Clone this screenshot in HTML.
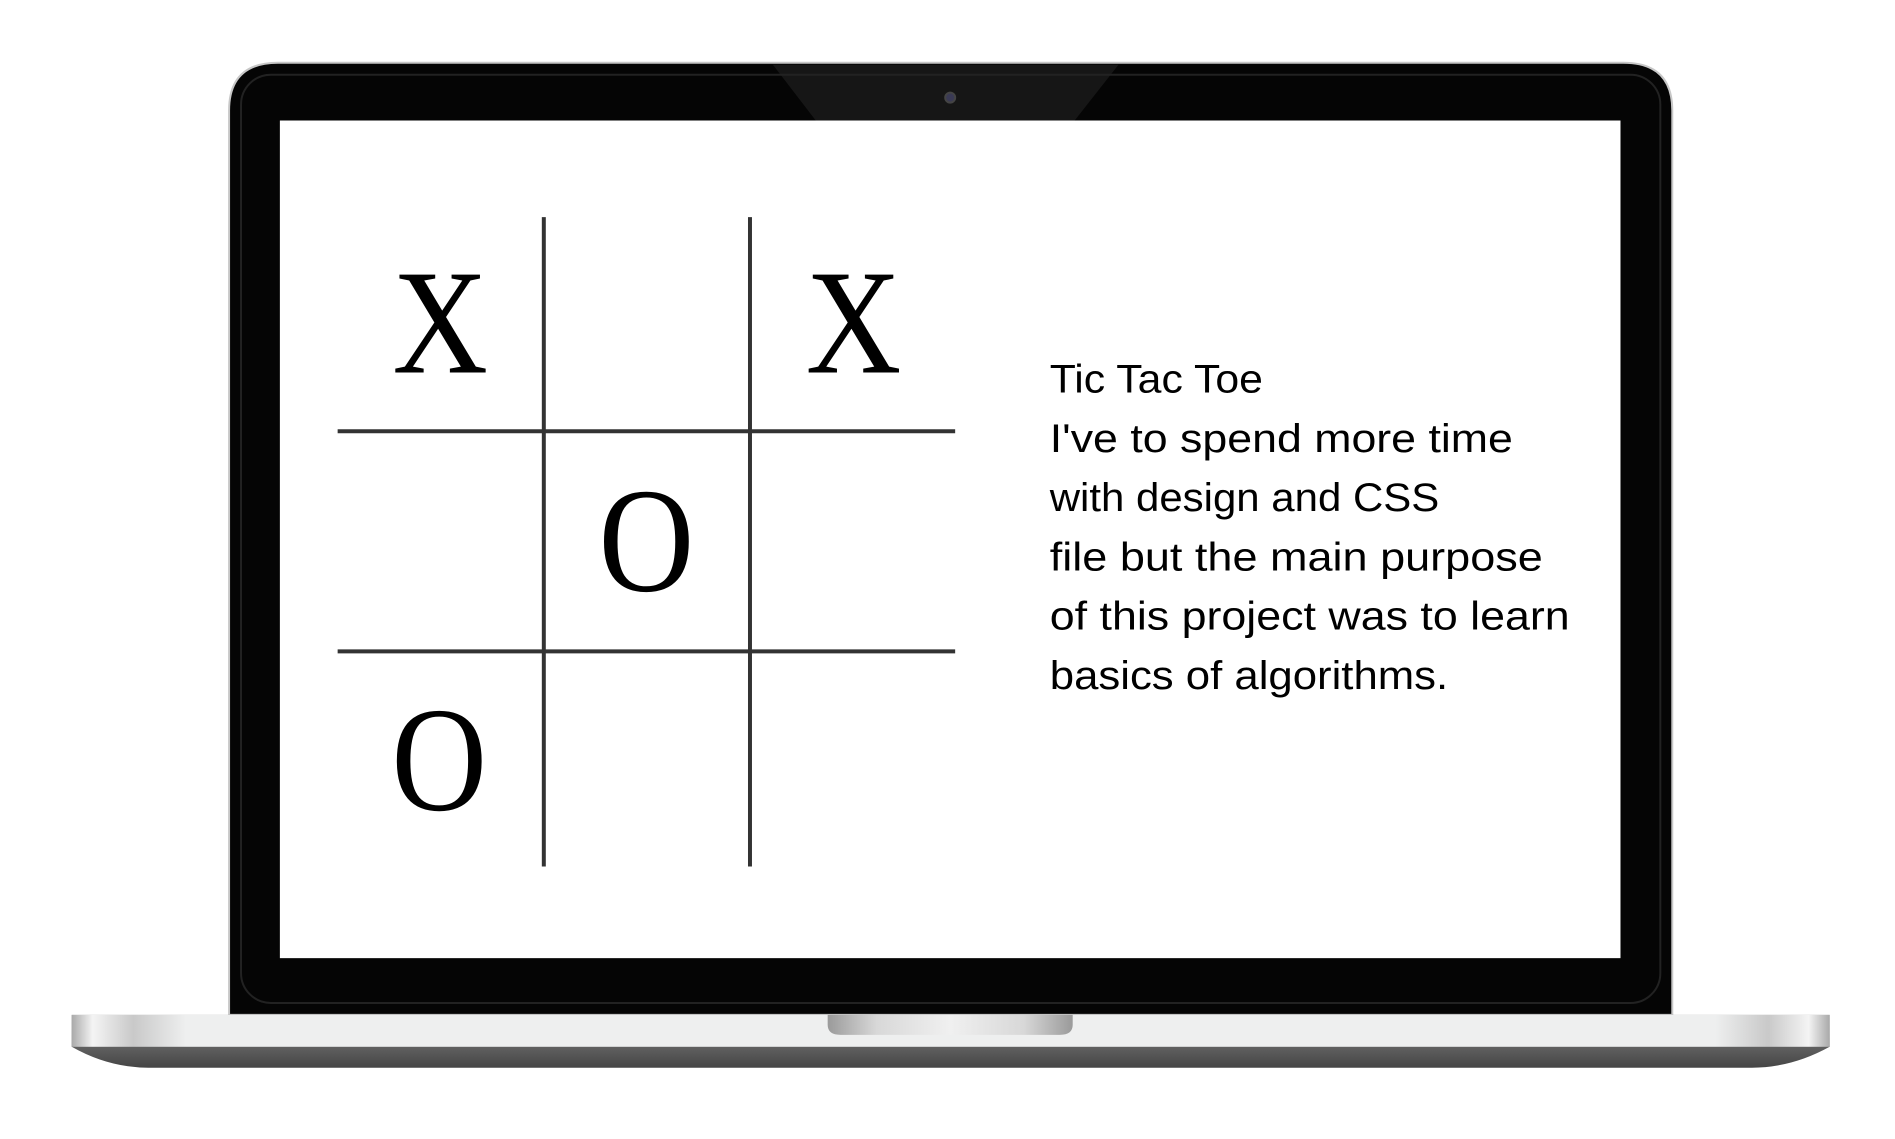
<!DOCTYPE html>
<html><head><meta charset="utf-8"><style>
html,body{margin:0;padding:0;background:#fff;}
svg{display:block}
</style></head><body>
<svg width="1895" height="1139" viewBox="0 0 1895 1139" xmlns="http://www.w3.org/2000/svg">
<defs>
<linearGradient id="base" x1="0" y1="0" x2="1" y2="0">
<stop offset="0" stop-color="#a9a9a9"/><stop offset="0.012" stop-color="#f4f4f4"/><stop offset="0.035" stop-color="#c9c9c9"/><stop offset="0.065" stop-color="#eeefef"/><stop offset="0.935" stop-color="#eeefef"/><stop offset="0.965" stop-color="#c9c9c9"/><stop offset="0.988" stop-color="#f4f4f4"/><stop offset="1" stop-color="#a9a9a9"/>
</linearGradient>
<linearGradient id="bot" x1="0" y1="0" x2="0" y2="1">
<stop offset="0" stop-color="#8a8a8a"/><stop offset="1" stop-color="#454545"/>
</linearGradient>
<linearGradient id="notch" x1="0" y1="0" x2="1" y2="0">
<stop offset="0" stop-color="#9a9a9a"/><stop offset="0.2" stop-color="#d8d8d8"/><stop offset="0.5" stop-color="#f0f0f0"/><stop offset="0.8" stop-color="#d8d8d8"/><stop offset="1" stop-color="#9a9a9a"/>
</linearGradient>
</defs>
<g transform="translate(-1,-1) scale(0.996)">
<path d="M231 1020 L231 112 Q231 64 280 64 L1631 64 Q1680 64 1680 112 L1680 1020 Z" fill="#050505" stroke="#c8c8c8" stroke-width="2"/>
<path d="M777 66 L1124 66 L1080 122 L820 122 Z" fill="#161616"/>
<rect x="243" y="76" width="1425" height="932" rx="30" fill="none" stroke="#222" stroke-width="2"/>
<circle cx="955" cy="99" r="5" fill="#3a3a55" stroke="#444" stroke-width="2"/>
<rect x="282" y="122" width="1346" height="841" fill="#fff"/>
<path d="M73 1020 L1838 1020 L1838 1052 Q1800 1073 1760 1073 L150 1073 Q110 1073 73 1052 Z" fill="url(#bot)"/>
<rect x="73" y="1020" width="1765" height="32" fill="url(#base)"/>
<path d="M832 1020 L1078 1020 L1078 1030 Q1078 1040 1065 1040 L845 1040 Q832 1040 832 1030 Z" fill="url(#notch)"/>
<g stroke="#333" stroke-width="4">
<line x1="547" y1="219" x2="547" y2="871"/>
<line x1="754" y1="219" x2="754" y2="871"/>
<line x1="340" y1="434" x2="960" y2="434"/>
<line x1="340" y1="655" x2="960" y2="655"/>
</g>
<g font-family="Liberation Serif, serif" font-size="150" text-anchor="middle" fill="#000">
<text x="443" y="375" textLength="96" lengthAdjust="spacingAndGlyphs">X</text>
<text x="858" y="375" textLength="96" lengthAdjust="spacingAndGlyphs">X</text>
<text x="650" y="594" textLength="96" lengthAdjust="spacingAndGlyphs">O</text>
<text x="442" y="814" textLength="96" lengthAdjust="spacingAndGlyphs">O</text>
</g>
<g font-family="Liberation Sans, sans-serif" font-size="40" fill="#000">
<text x="1055" y="395" textLength="214" lengthAdjust="spacingAndGlyphs">Tic Tac Toe</text>
<text x="1055" y="455" textLength="465" lengthAdjust="spacingAndGlyphs">I've to spend more time</text>
<text x="1055" y="514" textLength="391" lengthAdjust="spacingAndGlyphs">with design and CSS</text>
<text x="1055" y="574" textLength="495" lengthAdjust="spacingAndGlyphs">file but the main purpose</text>
<text x="1055" y="633" textLength="522" lengthAdjust="spacingAndGlyphs">of this project was to learn</text>
<text x="1055" y="693" textLength="400" lengthAdjust="spacingAndGlyphs">basics of algorithms.</text>
</g>
</g>
</svg>
</body></html>
